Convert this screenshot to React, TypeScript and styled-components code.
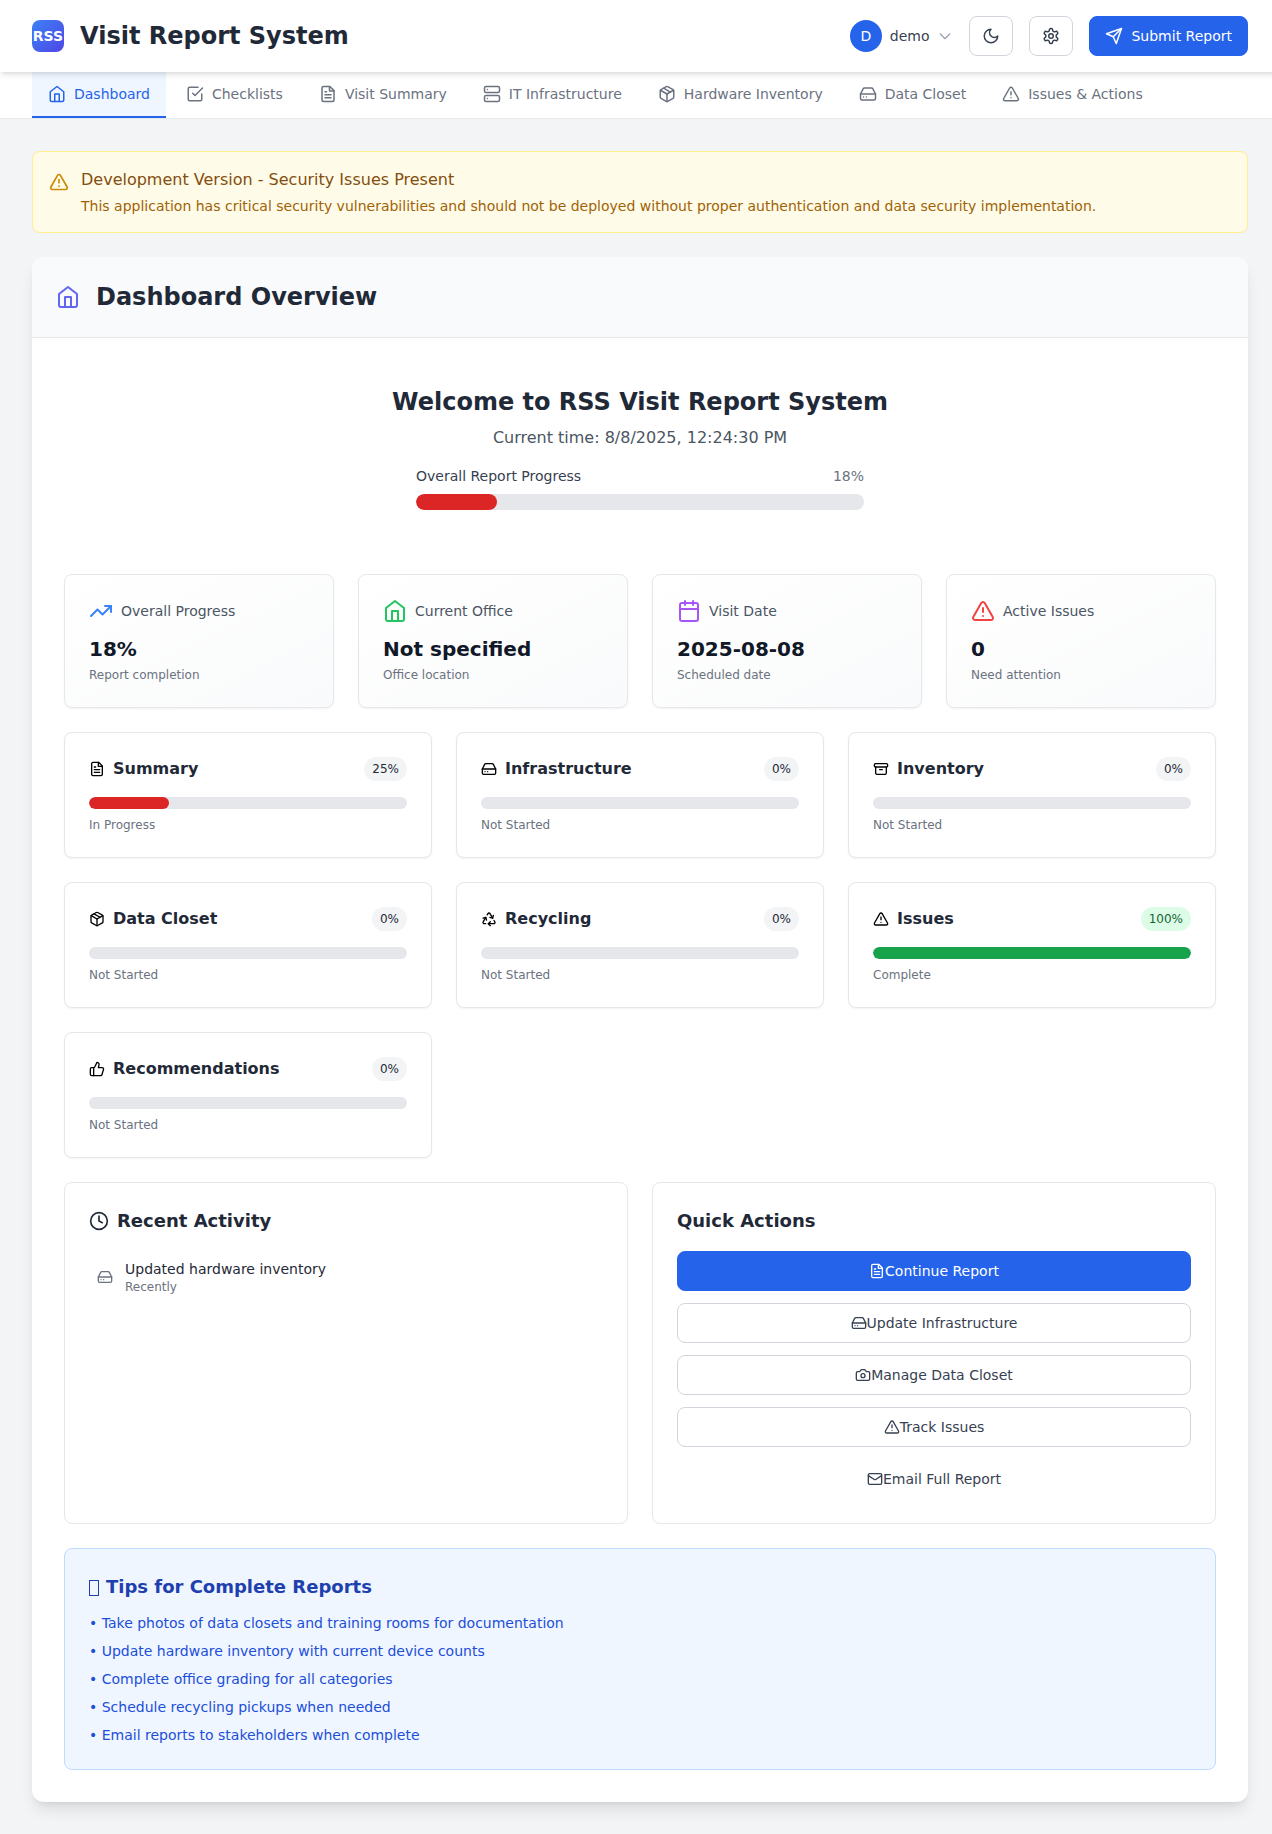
import React from "react";
import styled, { createGlobalStyle } from "styled-components";
import { Recycle } from "lucide-react";

const GlobalStyle = createGlobalStyle`
  *, *::before, *::after { box-sizing: border-box; }
  body {
    margin: 0;
    background: #f3f4f6;
    color: #111827;
    font-family: "DejaVu Sans", sans-serif;
    font-size: 16px;
    line-height: 24px;
  }
  h1, h2, h3, p, ul { margin: 0; padding: 0; }
  ul { list-style: none; }
  button { font: inherit; cursor: pointer; }
`;

/* ---------- Icons ---------- */

const shapes = {
  home: (
    <>
      <path d="m3 9 9-7 9 7v11a2 2 0 0 1-2 2H5a2 2 0 0 1-2-2z" />
      <polyline points="9 22 9 12 15 12 15 22" />
    </>
  ),
  check: (
    <>
      <polyline points="9 11 12 14 22 4" />
      <path d="M21 12v7a2 2 0 0 1-2 2H5a2 2 0 0 1-2-2V5a2 2 0 0 1 2-2h11" />
    </>
  ),
  file: (
    <>
      <path d="M14.5 2H6a2 2 0 0 0-2 2v16a2 2 0 0 0 2 2h12a2 2 0 0 0 2-2V7.5L14.5 2z" />
      <polyline points="14 2 14 8 20 8" />
      <line x1="16" x2="8" y1="13" y2="13" />
      <line x1="16" x2="8" y1="17" y2="17" />
      <line x1="10" x2="8" y1="9" y2="9" />
    </>
  ),
  server: (
    <>
      <rect width="20" height="8" x="2" y="2" rx="2" />
      <rect width="20" height="8" x="2" y="14" rx="2" />
      <line x1="6" x2="6.01" y1="6" y2="6" />
      <line x1="6" x2="6.01" y1="18" y2="18" />
    </>
  ),
  box: (
    <>
      <path d="m7.5 4.27 9 5.15" />
      <path d="M21 8a2 2 0 0 0-1-1.73l-7-4a2 2 0 0 0-2 0l-7 4A2 2 0 0 0 3 8v8a2 2 0 0 0 1 1.73l7 4a2 2 0 0 0 2 0l7-4A2 2 0 0 0 21 16Z" />
      <path d="m3.3 7 8.7 5 8.7-5" />
      <path d="M12 22V12" />
    </>
  ),
  drive: (
    <>
      <line x1="22" x2="2" y1="12" y2="12" />
      <path d="M5.45 5.11 2 12v6a2 2 0 0 0 2 2h16a2 2 0 0 0 2-2v-6l-3.45-6.89A2 2 0 0 0 16.76 4H7.24a2 2 0 0 0-1.79 1.11z" />
      <line x1="6" x2="6.01" y1="16" y2="16" />
      <line x1="10" x2="10.01" y1="16" y2="16" />
    </>
  ),
  alert: (
    <>
      <path d="m21.73 18-8-14a2 2 0 0 0-3.48 0l-8 14A2 2 0 0 0 4 21h16a2 2 0 0 0 1.73-3Z" />
      <path d="M12 9v4" />
      <path d="M12 17h.01" />
    </>
  ),
  chevron: <path d="m19 9-7 7-7-7" />,
  moon: <path d="M12 3a6 6 0 0 0 9 9 9 9 0 1 1-9-9Z" />,
  settings: (
    <>
      <path d="M12.22 2h-.44a2 2 0 0 0-2 2v.18a2 2 0 0 1-1 1.73l-.43.25a2 2 0 0 1-2 0l-.15-.08a2 2 0 0 0-2.73.73l-.22.38a2 2 0 0 0 .73 2.73l.15.1a2 2 0 0 1 1 1.72v.51a2 2 0 0 1-1 1.74l-.15.09a2 2 0 0 0-.73 2.73l.22.38a2 2 0 0 0 2.73.73l.15-.08a2 2 0 0 1 2 0l.43.25a2 2 0 0 1 1 1.73V20a2 2 0 0 0 2 2h.44a2 2 0 0 0 2-2v-.18a2 2 0 0 1 1-1.73l.43-.25a2 2 0 0 1 2 0l.15.08a2 2 0 0 0 2.73-.73l.22-.39a2 2 0 0 0-.73-2.73l-.15-.08a2 2 0 0 1-1-1.74v-.5a2 2 0 0 1 1-1.74l.15-.09a2 2 0 0 0 .73-2.73l-.22-.38a2 2 0 0 0-2.73-.73l-.15.08a2 2 0 0 1-2 0l-.43-.25a2 2 0 0 1-1-1.73V4a2 2 0 0 0-2-2z" />
      <circle cx="12" cy="12" r="3" />
    </>
  ),
  send: (
    <>
      <path d="m22 2-7 20-4-9-9-4Z" />
      <path d="M22 2 11 13" />
    </>
  ),
  trend: (
    <>
      <polyline points="22 7 13.5 15.5 8.5 10.5 2 17" />
      <polyline points="16 7 22 7 22 13" />
    </>
  ),
  calendar: (
    <>
      <rect width="18" height="18" x="3" y="4" rx="2" />
      <line x1="16" x2="16" y1="2" y2="6" />
      <line x1="8" x2="8" y1="2" y2="6" />
      <line x1="3" x2="21" y1="10" y2="10" />
    </>
  ),
  archive: (
    <>
      <rect width="20" height="5" x="2" y="4" rx="2" />
      <path d="M4 9v9a2 2 0 0 0 2 2h12a2 2 0 0 0 2-2V9" />
      <path d="M10 13h4" />
    </>
  ),
  thumb: (
    <>
      <path d="M7 10v12" />
      <path d="M15 5.88 14 10h5.83a2 2 0 0 1 1.92 2.56l-2.33 8A2 2 0 0 1 17.5 22H4a2 2 0 0 1-2-2v-8a2 2 0 0 1 2-2h2.76a2 2 0 0 0 1.79-1.11L12 2h0a3.13 3.13 0 0 1 3 3.88Z" />
    </>
  ),
  clock: (
    <>
      <circle cx="12" cy="12" r="10" />
      <polyline points="12 6 12 12 16 14" />
    </>
  ),
  camera: (
    <>
      <path d="M14.5 4h-5L7 7H4a2 2 0 0 0-2 2v9a2 2 0 0 0 2 2h16a2 2 0 0 0 2-2V9a2 2 0 0 0-2-2h-3l-2.5-3z" />
      <circle cx="12" cy="13" r="3" />
    </>
  ),
  mail: (
    <>
      <rect width="20" height="16" x="2" y="4" rx="2" />
      <path d="m22 7-8.97 5.7a1.94 1.94 0 0 1-2.06 0L2 7" />
    </>
  ),
};

type IconName = keyof typeof shapes | "recycle";

const Svg = styled.svg<{ $color?: string }>`
  display: block;
  flex-shrink: 0;
  color: ${(p) => p.$color ?? "inherit"};
`;

function Icon({ name, size = 16, color }: { name: IconName; size?: number; color?: string }) {
  if (name === "recycle") return <Recycle size={size} color={color ?? "currentColor"} />;
  return (
    <Svg
      $color={color}
      width={size}
      height={size}
      viewBox="0 0 24 24"
      fill="none"
      stroke="currentColor"
      strokeWidth="2"
      strokeLinecap="round"
      strokeLinejoin="round"
    >
      {shapes[name]}
    </Svg>
  );
}

/* ---------- Shell ---------- */

const Viewport = styled.div`
  width: 100%;
  overflow-x: clip;
`;

const Page = styled.div`
  width: 1280px;
  min-height: 100vh;
`;

const Header = styled.header`
  position: sticky;
  top: 0;
  z-index: 40;
  display: flex;
  align-items: center;
  justify-content: space-between;
  height: 72px;
  padding: 0 32px;
  background: #fff;
  box-shadow: 0 4px 6px -1px rgba(0, 0, 0, 0.1), 0 2px 4px -2px rgba(0, 0, 0, 0.1);
`;

const Brand = styled.div`
  display: flex;
  align-items: center;
  gap: 16px;
`;

const Logo = styled.div`
  display: flex;
  align-items: center;
  justify-content: center;
  width: 32px;
  height: 32px;
  border-radius: 8px;
  background: linear-gradient(to bottom right, #3b82f6, #4f46e5);
  color: #fff;
  font-size: 14px;
  font-weight: 700;
  line-height: 20px;
`;

const BrandTitle = styled.h1`
  color: #1f2937;
  font-size: 24px;
  font-weight: 700;
  line-height: 32px;
`;

const HeaderActions = styled.div`
  display: flex;
  align-items: center;
  gap: 16px;
`;

const UserMenu = styled.div`
  display: flex;
  align-items: center;
  gap: 8px;
  color: #374151;
  font-size: 14px;
  line-height: 20px;
`;

const Avatar = styled.div`
  display: flex;
  align-items: center;
  justify-content: center;
  width: 32px;
  height: 32px;
  border-radius: 50%;
  background: #2563eb;
  color: #fff;
`;

type Variant = "primary" | "outline" | "ghost";

const fills: Record<Variant, string> = {
  primary: "background: #2563eb; color: #fff; border: 1px solid #2563eb;",
  outline: "background: #fff; color: #374151; border: 1px solid #d1d5db;",
  ghost: "background: transparent; color: #374151; border: 1px solid transparent;",
};

const Button = styled.button<{ $variant: Variant; $gap?: number; $padX?: number }>`
  display: flex;
  align-items: center;
  justify-content: center;
  gap: ${(p) => p.$gap ?? 0}px;
  height: 40px;
  padding: 0 ${(p) => p.$padX ?? 15}px;
  border-radius: 8px;
  font-size: 14px;
  line-height: 20px;
  ${(p) => fills[p.$variant]}
`;

const Nav = styled.nav`
  display: flex;
  gap: 4px;
  padding: 0 32px;
  background: #fff;
  border-bottom: 1px solid #e5e7eb;
`;

const Tab = styled.div<{ $active?: boolean }>`
  display: flex;
  align-items: center;
  gap: 8px;
  padding: 12px 16px;
  border-bottom: 2px solid ${(p) => (p.$active ? "#2563eb" : "transparent")};
  background: ${(p) => (p.$active ? "#eff6ff" : "transparent")};
  color: ${(p) => (p.$active ? "#2563eb" : "#6b7280")};
  font-size: 14px;
  line-height: 20px;
  white-space: nowrap;
`;

const Main = styled.main`
  display: flex;
  flex-direction: column;
  gap: 24px;
  padding: 32px;
`;

/* ---------- Alert ---------- */

const Alert = styled.section`
  display: flex;
  gap: 12px;
  padding: 16px;
  border: 1px solid #fef08a;
  border-radius: 8px;
  background: #fefce8;
`;

const AlertIcon = styled.div`
  padding-top: 4px;
`;

const AlertTitle = styled.h3`
  color: #854d0e;
  font-size: 16px;
  font-weight: 500;
  line-height: 24px;
`;

const AlertText = styled.p`
  margin-top: 4px;
  color: #a16207;
  font-size: 14px;
  line-height: 20px;
`;

/* ---------- Dashboard card ---------- */

const Card = styled.section`
  overflow: hidden;
  border-radius: 12px;
  background: #fff;
  box-shadow: 0 10px 15px -3px rgba(0, 0, 0, 0.1), 0 4px 6px -4px rgba(0, 0, 0, 0.1);
`;

const CardHeader = styled.div`
  display: flex;
  align-items: center;
  gap: 16px;
  padding: 24px;
  border-bottom: 1px solid #e5e7eb;
  background: #f9fafb;
`;

const Heading = styled.h2`
  color: #1f2937;
  font-size: 24px;
  font-weight: 700;
  line-height: 32px;
`;

const CardBody = styled.div`
  display: flex;
  flex-direction: column;
  gap: 24px;
  padding: 32px;
`;

const Welcome = styled.div`
  display: flex;
  flex-direction: column;
  align-items: center;
  padding: 16px 0 40px;
`;

const CurrentTime = styled.p`
  margin-top: 8px;
  color: #4b5563;
`;

const OverallProgress = styled.div`
  width: 448px;
  margin-top: 16px;
`;

const ProgressLabels = styled.div`
  display: flex;
  justify-content: space-between;
  margin-bottom: 8px;
  color: #374151;
  font-size: 14px;
  line-height: 20px;
`;

const Percent = styled.span`
  color: #6b7280;
`;

const Track = styled.div<{ $height: number }>`
  height: ${(p) => p.$height}px;
  overflow: hidden;
  border-radius: 9999px;
  background: #e5e7eb;
`;

const Fill = styled.div<{ $complete: boolean }>`
  height: 100%;
  border-radius: 9999px;
  background: ${(p) => (p.$complete ? "#16a34a" : "#dc2626")};
`;

function Progress({ value, height = 12 }: { value: number; height?: number }) {
  return (
    <Track $height={height}>
      <Fill $complete={value === 100} style={{ width: `${value}%` }} />
    </Track>
  );
}

const Grid = styled.div<{ $columns: number }>`
  display: grid;
  grid-template-columns: repeat(${(p) => p.$columns}, minmax(0, 1fr));
  gap: 24px;
`;

const Panel = styled.div<{ $raised?: boolean; $tinted?: boolean }>`
  padding: 24px;
  border: 1px solid #e5e7eb;
  border-radius: 8px;
  background: ${(p) => (p.$tinted ? "linear-gradient(to bottom right, #ffffff, #f9fafb)" : "#fff")};
  box-shadow: ${(p) => (p.$raised ? "0 1px 2px 0 rgba(0, 0, 0, 0.05)" : "none")};
`;

const StatLabel = styled.div`
  display: flex;
  align-items: center;
  gap: 8px;
  margin-bottom: 12px;
  color: #4b5563;
  font-size: 14px;
  line-height: 20px;
`;

const StatValue = styled.div`
  margin-bottom: 4px;
  color: #111827;
  font-size: 20px;
  font-weight: 700;
  line-height: 28px;
`;

const Caption = styled.div`
  color: #6b7280;
  font-size: 12px;
  line-height: 16px;
`;

const SectionHead = styled.div`
  display: flex;
  align-items: center;
  justify-content: space-between;
  margin-bottom: 16px;
`;

const SectionName = styled.div`
  display: flex;
  align-items: center;
  gap: 8px;
  color: #000;
`;

const SectionTitle = styled.h3`
  color: #1f2937;
  font-size: 16px;
  font-weight: 600;
  line-height: 24px;
`;

const Badge = styled.span<{ $complete: boolean }>`
  padding: 4px 8px;
  border-radius: 9999px;
  background: ${(p) => (p.$complete ? "#dcfce7" : "#f3f4f6")};
  color: ${(p) => (p.$complete ? "#166534" : "#1f2937")};
  font-size: 12px;
  line-height: 16px;
`;

const SectionStatus = styled(Caption)`
  margin-top: 8px;
`;

const PanelTitle = styled.h3`
  display: flex;
  align-items: center;
  gap: 8px;
  margin-bottom: 16px;
  color: #1f2937;
  font-size: 18px;
  font-weight: 600;
  line-height: 28px;
`;

const Activity = styled.div`
  display: flex;
  align-items: center;
  gap: 12px;
  padding: 8px;
`;

const ActivityTitle = styled.div`
  color: #1f2937;
  font-size: 14px;
  line-height: 20px;
`;

const ActionList = styled.div`
  display: flex;
  flex-direction: column;
  gap: 12px;
`;

const Tips = styled.section`
  padding: 24px;
  border: 1px solid #bfdbfe;
  border-radius: 8px;
  background: #eff6ff;
`;

const TipsTitle = styled.h3`
  display: flex;
  align-items: center;
  gap: 7px;
  margin-bottom: 12px;
  color: #1e40af;
  font-size: 18px;
  font-weight: 600;
  line-height: 28px;
`;

const TipsMark = styled.span`
  width: 10px;
  height: 16px;
  margin-top: 2px;
  border: 1px solid currentColor;
`;

const TipList = styled.ul`
  display: flex;
  flex-direction: column;
  gap: 8px;
  color: #1d4ed8;
  font-size: 14px;
  line-height: 20px;
`;

/* ---------- Data ---------- */

const tabs: { icon: IconName; label: string }[] = [
  { icon: "home", label: "Dashboard" },
  { icon: "check", label: "Checklists" },
  { icon: "file", label: "Visit Summary" },
  { icon: "server", label: "IT Infrastructure" },
  { icon: "box", label: "Hardware Inventory" },
  { icon: "drive", label: "Data Closet" },
  { icon: "alert", label: "Issues & Actions" },
];

const stats: { icon: IconName; color: string; label: string; value: string; note: string }[] = [
  { icon: "trend", color: "#3b82f6", label: "Overall Progress", value: "18%", note: "Report completion" },
  { icon: "home", color: "#22c55e", label: "Current Office", value: "Not specified", note: "Office location" },
  { icon: "calendar", color: "#a855f7", label: "Visit Date", value: "2025-08-08", note: "Scheduled date" },
  { icon: "alert", color: "#ef4444", label: "Active Issues", value: "0", note: "Need attention" },
];

const sections: { icon: IconName; label: string; value: number }[] = [
  { icon: "file", label: "Summary", value: 25 },
  { icon: "drive", label: "Infrastructure", value: 0 },
  { icon: "archive", label: "Inventory", value: 0 },
  { icon: "box", label: "Data Closet", value: 0 },
  { icon: "recycle", label: "Recycling", value: 0 },
  { icon: "alert", label: "Issues", value: 100 },
  { icon: "thumb", label: "Recommendations", value: 0 },
];

const actions: { icon: IconName; label: string; variant: Variant }[] = [
  { icon: "file", label: "Continue Report", variant: "primary" },
  { icon: "drive", label: "Update Infrastructure", variant: "outline" },
  { icon: "camera", label: "Manage Data Closet", variant: "outline" },
  { icon: "alert", label: "Track Issues", variant: "outline" },
  { icon: "mail", label: "Email Full Report", variant: "ghost" },
];

const tips = [
  "Take photos of data closets and training rooms for documentation",
  "Update hardware inventory with current device counts",
  "Complete office grading for all categories",
  "Schedule recycling pickups when needed",
  "Email reports to stakeholders when complete",
];

const statusOf = (value: number) =>
  value === 100 ? "Complete" : value > 0 ? "In Progress" : "Not Started";

export default function App() {
  return (
    <Viewport>
      <GlobalStyle />
      <Page>
        <Header>
          <Brand>
            <Logo>RSS</Logo>
            <BrandTitle>Visit Report System</BrandTitle>
          </Brand>
          <HeaderActions>
            <UserMenu>
              <Avatar>D</Avatar>
              <span>demo</span>
              <Icon name="chevron" size={16} color="#9ca3af" />
            </UserMenu>
            <Button $variant="outline" $padX={12} aria-label="Toggle theme">
              <Icon name="moon" size={18} />
            </Button>
            <Button $variant="outline" $padX={12} aria-label="Settings">
              <Icon name="settings" size={18} />
            </Button>
            <Button $variant="primary" $gap={8}>
              <Icon name="send" size={18} />
              Submit Report
            </Button>
          </HeaderActions>
        </Header>

        <Nav>
          {tabs.map((tab, i) => (
            <Tab key={tab.label} $active={i === 0}>
              <Icon name={tab.icon} size={18} />
              {tab.label}
            </Tab>
          ))}
        </Nav>

        <Main>
          <Alert>
            <AlertIcon>
              <Icon name="alert" size={20} color="#ca8a04" />
            </AlertIcon>
            <div>
              <AlertTitle>Development Version - Security Issues Present</AlertTitle>
              <AlertText>
                This application has critical security vulnerabilities and should not be deployed
                without proper authentication and data security implementation.
              </AlertText>
            </div>
          </Alert>

          <Card>
            <CardHeader>
              <Icon name="home" size={24} color="#6366f1" />
              <Heading>Dashboard Overview</Heading>
            </CardHeader>
            <CardBody>
              <Welcome>
                <Heading>Welcome to RSS Visit Report System</Heading>
                <CurrentTime>Current time: 8/8/2025, 12:24:30 PM</CurrentTime>
                <OverallProgress>
                  <ProgressLabels>
                    <span>Overall Report Progress</span>
                    <Percent>18%</Percent>
                  </ProgressLabels>
                  <Progress value={18} height={16} />
                </OverallProgress>
              </Welcome>

              <Grid $columns={4}>
                {stats.map((s) => (
                  <Panel key={s.label} $raised $tinted>
                    <StatLabel>
                      <Icon name={s.icon} size={24} color={s.color} />
                      {s.label}
                    </StatLabel>
                    <StatValue>{s.value}</StatValue>
                    <Caption>{s.note}</Caption>
                  </Panel>
                ))}
              </Grid>

              <Grid $columns={3}>
                {sections.map((s) => (
                  <Panel key={s.label} $raised>
                    <SectionHead>
                      <SectionName>
                        <Icon name={s.icon} />
                        <SectionTitle>{s.label}</SectionTitle>
                      </SectionName>
                      <Badge $complete={s.value === 100}>{s.value}%</Badge>
                    </SectionHead>
                    <Progress value={s.value} />
                    <SectionStatus>{statusOf(s.value)}</SectionStatus>
                  </Panel>
                ))}
              </Grid>

              <Grid $columns={2}>
                <Panel>
                  <PanelTitle>
                    <Icon name="clock" size={20} />
                    Recent Activity
                  </PanelTitle>
                  <Activity>
                    <Icon name="drive" color="#6b7280" />
                    <div>
                      <ActivityTitle>Updated hardware inventory</ActivityTitle>
                      <Caption>Recently</Caption>
                    </div>
                  </Activity>
                </Panel>
                <Panel>
                  <PanelTitle>Quick Actions</PanelTitle>
                  <ActionList>
                    {actions.map((a) => (
                      <Button key={a.label} $variant={a.variant}>
                        <Icon name={a.icon} />
                        {a.label}
                      </Button>
                    ))}
                  </ActionList>
                </Panel>
              </Grid>

              <Tips>
                <TipsTitle>
                  <TipsMark />
                  Tips for Complete Reports
                </TipsTitle>
                <TipList>
                  {tips.map((tip) => (
                    <li key={tip}>• {tip}</li>
                  ))}
                </TipList>
              </Tips>
            </CardBody>
          </Card>
        </Main>
      </Page>
    </Viewport>
  );
}
